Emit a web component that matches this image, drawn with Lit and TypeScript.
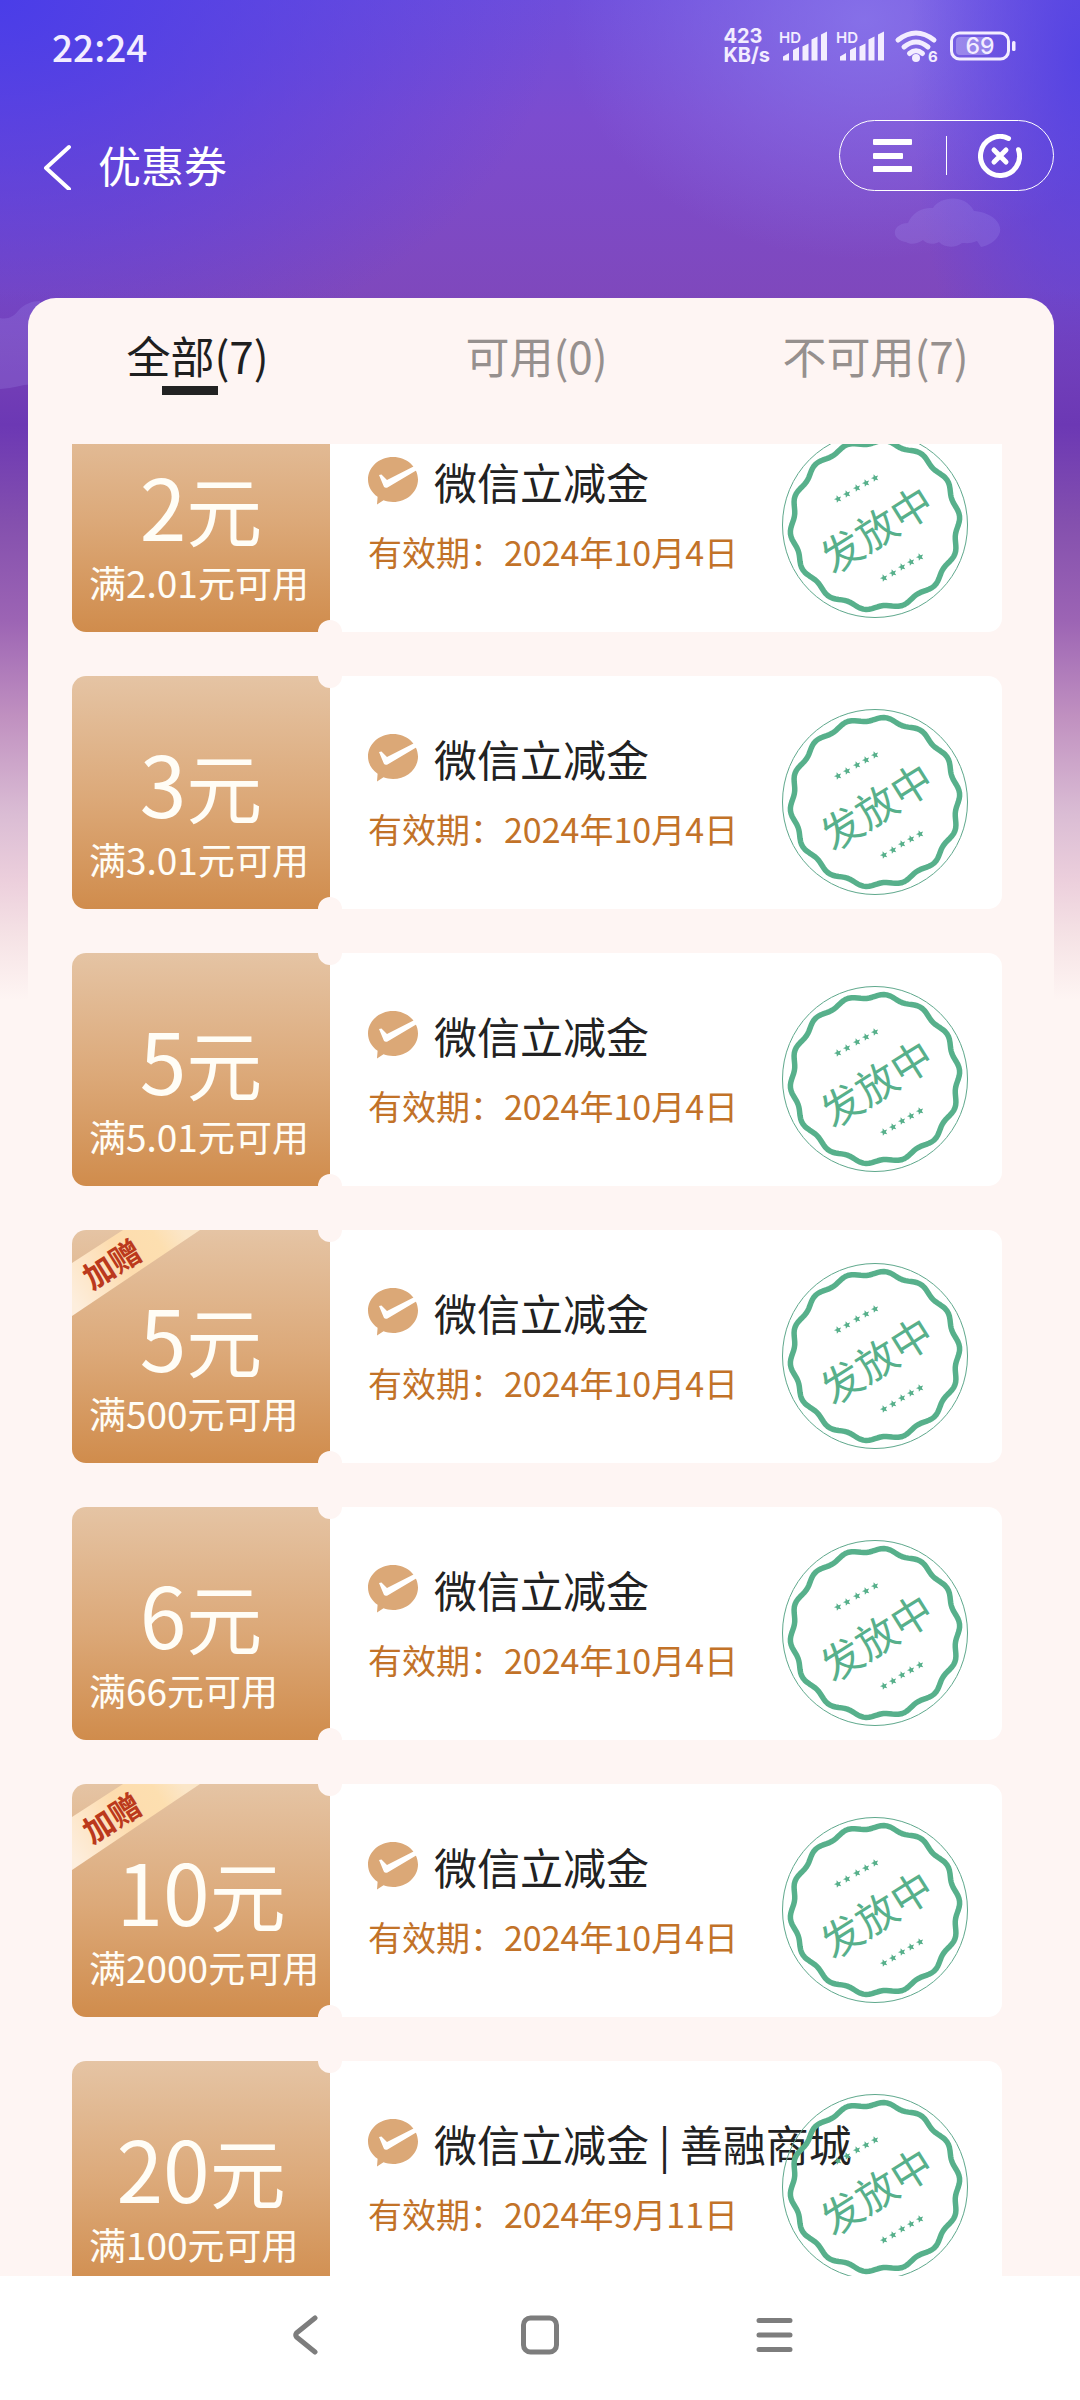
import { LitElement, html, css, svg, nothing } from "lit";
import { customElement, property, state, query } from "lit/decorators.js";
import { classMap } from "lit/directives/class-map.js";

interface Coupon {
  amount: string;
  condition: string;
  title: string;
  expires: string;
  bonus?: boolean;
}

const COUPONS: Coupon[] = [
  { amount: "2", condition: "满2.01元可用", title: "微信立减金", expires: "2024年10月4日" },
  { amount: "3", condition: "满3.01元可用", title: "微信立减金", expires: "2024年10月4日" },
  { amount: "5", condition: "满5.01元可用", title: "微信立减金", expires: "2024年10月4日" },
  { amount: "5", condition: "满500元可用", title: "微信立减金", expires: "2024年10月4日", bonus: true },
  { amount: "6", condition: "满66元可用", title: "微信立减金", expires: "2024年10月4日" },
  { amount: "10", condition: "满2000元可用", title: "微信立减金", expires: "2024年10月4日", bonus: true },
  { amount: "20", condition: "满100元可用", title: "微信立减金 | 善融商城", expires: "2024年9月11日" },
];

const TABS = ["全部(7)", "可用(0)", "不可用(7)"];

/** Outline of the seal: a circle whose radius ripples in 14 waves. */
function sealPath(cx: number, cy: number, radius: number, ripple: number): string {
  const points: string[] = [];
  for (let deg = 0; deg < 360; deg += 2) {
    const wave = Math.cos((14 * (deg - 7) * Math.PI) / 180);
    const r = radius + ripple * wave;
    const a = (deg * Math.PI) / 180;
    points.push(`${(cx + r * Math.sin(a)).toFixed(2)} ${(cy - r * Math.cos(a)).toFixed(2)}`);
  }
  return `M${points.join("L")}Z`;
}

function starPath(cx: number, cy: number, radius: number): string {
  const points: string[] = [];
  for (let i = 0; i < 10; i++) {
    const r = i % 2 ? radius * 0.45 : radius;
    const a = ((i * 36 - 20) * Math.PI) / 180;
    points.push(`${(cx + r * Math.sin(a)).toFixed(2)} ${(cy - r * Math.cos(a)).toFixed(2)}`);
  }
  return `M${points.join("L")}Z`;
}

const SEAL = sealPath(93, 93, 83, 2);
const STARS = [
  [56, 67], [65, 62], [75, 56], [84, 51], [93, 46],
  [102, 146], [111, 141], [120, 135], [129, 130], [138, 125],
]
  .map(([x, y]) => starPath(x, y, 4))
  .join("");

@customElement("status-bar")
export class StatusBar extends LitElement {
  static styles = css`
    :host {
      display: flex;
      align-items: center;
      justify-content: space-between;
      height: 92px;
      padding: 0 64px 0 52px;
      color: #f3edff;
    }
    .time {
      font-size: 37px;
      line-height: 48px;
      font-weight: 500;
    }
    .indicators {
      display: flex;
      align-items: center;
      gap: 11px;
      font-family: Inter, sans-serif;
    }
    .speed {
      font-size: 20px;
      line-height: 19px;
      font-weight: 700;
    }
    .icon {
      display: block;
      overflow: visible;
      fill: currentColor;
    }
    .hd {
      font-size: 15px;
      font-weight: 600;
    }
    .small {
      font-size: 15px;
      font-weight: 700;
    }
    .level {
      font-size: 23px;
      font-weight: 500;
      text-anchor: middle;
    }
  `;

  private signal() {
    return html`<svg class="icon" width="46" height="32" viewBox="0 0 46 32" aria-hidden="true">
      <text class="hd" x="-2" y="13">HD</text>
      <path
        d="M2 30.500V26.500L8 23V30.500ZM12 30.500V20L18 17V30.500ZM21.500 30.500V16.500L27.500 13.500V30.500ZM30.500 30.500V9.500L36.500 6.500V30.500ZM40 30.500V4.500L46 1.500V30.500Z"
      />
    </svg>`;
  }

  render() {
    return html`
      <span class="time">22:24</span>
      <div class="indicators">
        <div class="speed"><div>423</div><div>KB/s</div></div>
        ${this.signal()} ${this.signal()}
        <svg class="icon" width="44" height="32" viewBox="0 0 44 32" aria-hidden="true">
          <g fill="none" stroke="currentColor" stroke-width="5" stroke-linecap="round">
            <path d="M3 10Q21 -4 39 10" />
            <path d="M9 17Q21 7 33 17" />
            <path d="M14.500 23.500Q21 18 27.500 23.500" />
          </g>
          <circle cx="21" cy="28" r="4" />
          <text class="small" x="33" y="32">6</text>
        </svg>
        <svg class="icon" width="66" height="32" viewBox="0 0 66 32" aria-hidden="true">
          <rect x="1.500" y="3" width="57" height="26" rx="8" fill="none" stroke="currentColor" stroke-width="3" />
          <rect x="6" y="7" width="34" height="18" rx="4" opacity="0.300" />
          <rect x="62" y="11" width="3.500" height="10" rx="1.500" />
          <text class="level" x="30" y="24">69</text>
        </svg>
      </div>
    `;
  }
}

@customElement("coupon-card")
export class CouponCard extends LitElement {
  @property({ attribute: false }) coupon!: Coupon;

  static styles = css`
    :host {
      display: flex;
      position: relative;
      height: 233px;
      border-radius: 14px;
      overflow: hidden;
      background: #ffffff;
    }
    .stub {
      position: relative;
      flex: none;
      box-sizing: border-box;
      width: 258px;
      padding-top: 64px;
      background: linear-gradient(180deg, #e5c4a4 0%, #dca979 52%, #d08c4c 100%);
      color: #fffdf6;
    }
    .stub::before,
    .stub::after {
      content: "";
      position: absolute;
      right: -12px;
      width: 24px;
      height: 24px;
      border-radius: 50%;
      background: #fef5f3;
    }
    .stub::before {
      top: -12px;
    }
    .stub::after {
      bottom: -12px;
    }
    .ribbon {
      position: absolute;
      left: 0;
      top: 0;
    }
    .ribbon-text {
      font-size: 31px;
      font-weight: 700;
      fill: #bb391c;
      text-anchor: middle;
    }
    .amount {
      position: relative;
      font-size: 84px;
      line-height: 84px;
      text-align: center;
    }
    .unit {
      font-size: 76px;
      line-height: 76px;
    }
    .condition {
      position: relative;
      margin-top: 11px;
      padding-left: 17px;
      font-size: 37px;
      line-height: 48px;
      white-space: nowrap;
    }
    .body {
      flex: 1;
      min-width: 0;
      padding: 56px 0 0 38px;
      white-space: nowrap;
    }
    .heading {
      display: flex;
      align-items: center;
      gap: 16px;
    }
    .bubble {
      flex: none;
    }
    .title {
      margin: 0;
      font-size: 43px;
      line-height: 52px;
      font-weight: 400;
      color: #222222;
    }
    .expiry {
      margin: 23px 0 0;
      font-size: 34px;
      line-height: 44px;
      color: #c27228;
    }
    .seal {
      position: absolute;
      top: 33px;
      right: 34px;
      fill: #57b08b;
    }
    .seal-text {
      font-size: 41px;
      text-anchor: middle;
    }
  `;

  private ribbon() {
    return html`<svg class="ribbon" width="130" height="88" viewBox="0 0 130 88">
      <defs>
        <linearGradient id="ribbon-fill" gradientUnits="userSpaceOnUse" x1="0" y1="70" x2="110" y2="0">
          <stop offset="0" stop-color="#fdeedd" />
          <stop offset="0.500" stop-color="#fddcae" />
          <stop offset="0.800" stop-color="#fddfb0" />
          <stop offset="1" stop-color="#fbe6c8" />
        </linearGradient>
      </defs>
      <path d="M0 33L51 0H128L0 86Z" fill="url(#ribbon-fill)" />
      <text class="ribbon-text" transform="translate(40 34) rotate(-32)" x="0" y="12">加赠</text>
    </svg>`;
  }

  render() {
    const c = this.coupon;
    return html`
      <div class="stub">
        ${c.bonus ? this.ribbon() : nothing}
        <div class="amount">${c.amount}<span class="unit">元</span></div>
        <div class="condition">${c.condition}</div>
      </div>
      <div class="body">
        <div class="heading">
          <svg class="bubble" width="50" height="48" viewBox="0 0 50 48" aria-hidden="true">
            <path
              fill="#dba877"
              d="M25 0C38.800 0 50 10 50 22.500S38.800 45 25 45C21.500 45 18.500 44.500 15.500 43.300L9 47.500L9.600 39.800C3.700 35.700 0 29.500 0 22.500C0 10 11.200 0 25 0Z"
            />
            <path fill="#ffffff" d="M11 18L13.500 17.500L19 23L46.500 9L49 13L19.500 30.500Q17 31.500 15.800 29.500Z" />
          </svg>
          <h2 class="title">${c.title}</h2>
        </div>
        <p class="expiry">有效期：${c.expires}</p>
      </div>
      <svg class="seal" width="186" height="186" viewBox="0 0 186 186">
        <circle cx="93" cy="93" r="92.500" fill="none" stroke="#5fa88c" stroke-width="1" />
        ${svg`<path d=${SEAL} fill="none" stroke="#57b08b" stroke-width="5.500" stroke-linejoin="round" />
        <path d=${STARS} />`}
        <text class="seal-text" transform="translate(95 98) rotate(-32)" x="0" y="15">发放中</text>
      </svg>
    `;
  }
}

@customElement("app-root")
export class AppRoot extends LitElement {
  @state() private active = 0;
  @query(".list") private list!: HTMLElement;

  static styles = css`
    :host {
      display: flex;
      flex-direction: column;
      position: relative;
      height: 100vh;
      overflow: hidden;
      font-family: "Noto Sans CJK SC", "Noto Sans", sans-serif;
      background:
        linear-gradient(
          180deg,
          rgba(108, 56, 180, 0) 290px,
          #6c38b4 425px,
          #8450ae 522px,
          #9c64b4 620px,
          #c090c0 716px,
          #dabcd4 813px,
          #eccfdc 881px,
          #f5e2e5 935px,
          #fef5f3 1000px
        ),
        radial-gradient(ellipse 170px 420px at 100% 60px, rgba(82, 66, 228, 0.9), rgba(82, 66, 228, 0)),
        radial-gradient(ellipse 300px 240px at 80% 20px, rgba(139, 120, 236, 0.8), rgba(139, 120, 236, 0)),
        radial-gradient(ellipse 560px 380px at 0 0, #4a3de8, rgba(74, 61, 232, 0)),
        linear-gradient(180deg, #6f4edb 0, #7c4ccf 120px, #7f48bc 300px);
    }
    .cloud {
      position: absolute;
      fill: #a99bf5;
      opacity: 0.2;
    }
    .cloud-right {
      top: 198px;
      right: 78px;
    }
    .cloud-left {
      top: 298px;
      left: 0;
    }
    .header {
      position: relative;
      display: flex;
      flex: none;
      align-items: flex-start;
      justify-content: space-between;
      box-sizing: border-box;
      height: 206px;
      padding: 28px 26px 0 43px;
      color: #ffffff;
    }
    .back {
      display: flex;
      align-items: center;
      gap: 27px;
      color: inherit;
      text-decoration: none;
    }
    .page-title {
      margin: 0;
      font-size: 43px;
      line-height: 88px;
      font-weight: 400;
    }
    .capsule {
      display: flex;
      align-items: center;
      box-sizing: border-box;
      width: 215px;
      height: 71px;
      border: 1px solid #ffffff;
      border-radius: 36px;
    }
    .capsule-button {
      display: flex;
      flex: 1;
      align-items: center;
      justify-content: center;
      height: 100%;
      padding: 0;
      border: 0;
      background: none;
      color: inherit;
    }
    .divider {
      width: 1px;
      height: 39px;
      background: #ffffff;
    }
    .panel {
      position: relative;
      display: flex;
      flex: 1;
      flex-direction: column;
      min-height: 0;
      margin: 0 26px 0 28px;
      border-radius: 28px 28px 0 0;
      background: #fef5f3;
    }
    .tabs {
      display: grid;
      flex: none;
      grid-template-columns: repeat(3, 1fr);
      align-items: start;
      box-sizing: border-box;
      height: 146px;
      padding: 25px 9px 0 0;
    }
    .tab {
      position: relative;
      height: 72px;
      padding: 0 0 8px;
      border: 0;
      background: none;
      font-family: inherit;
      font-size: 44px;
      line-height: 64px;
      color: #96908e;
    }
    .tab.active {
      color: #1f1f1f;
    }
    .tab.active::after {
      content: "";
      position: absolute;
      left: calc(50% - 36px);
      bottom: 0;
      width: 56px;
      height: 9px;
      background: #222222;
    }
    .list {
      display: flex;
      flex: 1;
      flex-direction: column;
      gap: 44px;
      min-height: 0;
      margin: 0;
      padding: 0 52px 44px 44px;
      overflow-y: auto;
      scrollbar-width: none;
      list-style: none;
    }
    .list::-webkit-scrollbar {
      display: none;
    }
    .item {
      flex: none;
    }
    .nav {
      display: flex;
      flex: none;
      justify-content: center;
      height: 124px;
      background: #ffffff;
    }
    .nav-button {
      display: flex;
      align-items: center;
      justify-content: center;
      width: 235px;
      padding: 0 0 6px;
      border: 0;
      background: none;
      color: #7d7d7d;
    }
    .line-icon {
      display: block;
      fill: none;
      stroke: currentColor;
      stroke-linecap: round;
      stroke-linejoin: round;
    }
  `;

  firstUpdated() {
    this.updateComplete.then(() => {
      this.list.scrollTop = 45;
    });
  }

  render() {
    return html`
      <svg class="cloud cloud-right" width="108" height="50" viewBox="0 0 108 50" aria-hidden="true">
        <path
          d="M12 44C4 43 0 38 1 33C2 28 8 25 14 25C18 15 28 9 39 10C46 -1 70 -5 80 13C96 14 108 24 106 34C103 44 92 48 87 49L83 43C76 46 72 45 68 45C62 50 50 50 45 44C40 47 32 46 29 42C24 46 16 47 12 44Z"
        />
      </svg>
      <svg class="cloud cloud-left" width="40" height="92" viewBox="0 0 40 92" aria-hidden="true">
        <path d="M0 20C8 22 14 18 18 13C24 6 32 3 40 3V89C28 83 20 90 0 91Z" />
      </svg>
      <status-bar></status-bar>
      <header class="header">
        <a class="back" href="#" aria-label="返回">
          <svg class="line-icon" width="28" height="52" viewBox="0 0 28 52" stroke-width="4">
            <path d="M26 9L3 30L26 51" />
          </svg>
          <h1 class="page-title">优惠券</h1>
        </a>
        <div class="capsule">
          <button class="capsule-button" aria-label="菜单">
            <svg width="40" height="34" viewBox="0 0 40 34" fill="currentColor">
              <rect x="0" y="0" width="39" height="6" rx="1" />
              <rect x="0" y="14" width="30" height="6" rx="1" />
              <rect x="0" y="27" width="39" height="6" rx="1" />
            </svg>
          </button>
          <span class="divider"></span>
          <button class="capsule-button" aria-label="关闭">
            <svg class="line-icon" width="44" height="44" viewBox="0 0 44 44" stroke-width="5">
              <path d="M30.500 4.400A19.500 19.500 0 1 0 40.500 15.700" />
              <path d="M16 16L28 28M28 16L16 28" />
            </svg>
          </button>
        </div>
      </header>
      <main class="panel">
        <div class="tabs" role="tablist">
          ${TABS.map(
            (label, i) => html`<button
              class=${classMap({ tab: true, active: i === this.active })}
              role="tab"
              aria-selected=${i === this.active ? "true" : "false"}
              @click=${() => (this.active = i)}
            >${label}</button>`,
          )}
        </div>
        <ul class="list">
          ${COUPONS.map((c) => html`<li class="item"><coupon-card .coupon=${c}></coupon-card></li>`)}
        </ul>
      </main>
      <nav class="nav">
        <button class="nav-button" aria-label="后退">
          <svg class="line-icon" width="26" height="40" viewBox="0 0 26 40" stroke-width="5">
            <path d="M23 3L4.500 18Q3 20 4.500 22L23 37" />
          </svg>
        </button>
        <button class="nav-button" aria-label="主屏幕">
          <svg class="line-icon" width="40" height="40" viewBox="0 0 40 40" stroke-width="5">
            <rect x="3.500" y="3" width="33" height="34" rx="7" />
          </svg>
        </button>
        <button class="nav-button" aria-label="最近任务">
          <svg class="line-icon" width="40" height="40" viewBox="0 0 40 40" stroke-width="5">
            <path d="M4 5.500H35M4 20H35M4 34.500H35" />
          </svg>
        </button>
      </nav>
    `;
  }
}
